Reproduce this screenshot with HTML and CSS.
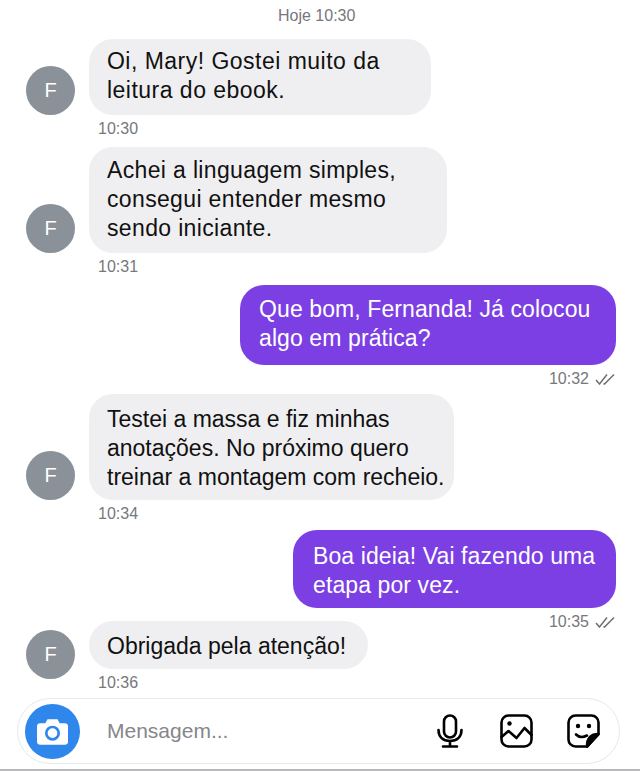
FILE: index.html
```html
<!DOCTYPE html>
<html lang="pt-BR">
<head>
    <meta charset="UTF-8">
    <meta name="viewport" content="width=device-width, initial-scale=1.0">
    <title>Mensagens</title>
    <link rel="stylesheet" href="styles.css">
</head>
<body>
    <div class="screen">
        <div class="day">Hoje 10:30</div>

        <div class="msg">
            <div class="avatar">F</div>
            <div class="body">
                <div class="bubble bubble-in b1">Oi, Mary! Gostei muito da<br>leitura do ebook.</div>
                <div class="time">10:30</div>
            </div>
        </div>

        <div class="msg">
            <div class="avatar">F</div>
            <div class="body">
                <div class="bubble bubble-in b2">Achei a linguagem simples,<br>consegui entender mesmo<br>sendo iniciante.</div>
                <div class="time">10:31</div>
            </div>
        </div>

        <div class="msg msg-out">
            <div class="body">
                <div class="bubble bubble-out b3">Que bom, Fernanda! Já colocou<br>algo em prática?</div>
                <div class="time time-out">10:32
                    <svg class="checks" viewBox="0 0 20 12"><path d="M1 7l3.500 4L12 1.500M8.500 10.500l1 .5L19 1.500"/></svg>
                </div>
            </div>
        </div>

        <div class="msg msg-before-out">
            <div class="avatar">F</div>
            <div class="body">
                <div class="bubble bubble-in b4">Testei a massa e fiz minhas<br>anotações. No próximo quero<br>treinar a montagem com recheio.</div>
                <div class="time">10:34</div>
            </div>
        </div>

        <div class="msg msg-out msg-tight">
            <div class="body">
                <div class="bubble bubble-out b5">Boa ideia! Vai fazendo uma<br>etapa por vez.</div>
                <div class="time time-out">10:35
                    <svg class="checks" viewBox="0 0 20 12"><path d="M1 7l3.500 4L12 1.500M8.500 10.500l1 .5L19 1.500"/></svg>
                </div>
            </div>
        </div>

        <div class="msg msg-last">
            <div class="avatar">F</div>
            <div class="body">
                <div class="bubble bubble-in b6">Obrigada pela atenção!</div>
                <div class="time">10:36</div>
            </div>
        </div>

        <div class="composer">
            <div class="camera">
                <svg viewBox="0 0 28 24" width="31" height="27">
                    <path fill="#fff" d="M9.500 1h9l2 3.500H25a3 3 0 0 1 3 3V21a3 3 0 0 1-3 3H3a3 3 0 0 1-3-3V7.500a3 3 0 0 1 3-3h4.500z"/>
                    <circle cx="14" cy="13.500" r="5.600" fill="none" stroke="#2f86eb" stroke-width="2.400"/>
                </svg>
            </div>
            <div class="placeholder">Mensagem...</div>
            <div class="tools">
                <svg class="tool" viewBox="0 0 26 34" width="26" height="34">
                    <rect x="7" y="1.500" width="12" height="22" rx="6"/>
                    <path d="M1.500 16c0 7 4.500 11 11.500 11s11.500-4 11.500-11M13 27v5.500M6 32.500h14"/>
                </svg>
                <svg class="tool tool-image" viewBox="0 0 33 34" width="33" height="34">
                    <rect x="1.500" y="1.500" width="30" height="31" rx="7"/>
                    <circle cx="9.500" cy="9.500" r="2.200" class="dot"/>
                    <path d="M1.500 23l7-6 8 7 8-10 7 7"/>
                </svg>
                <svg class="tool tool-sticker" viewBox="0 0 33 34" width="33" height="34">
                    <path d="M20 32.500H8.500a7 7 0 0 1-7-7v-17a7 7 0 0 1 7-7h16a7 7 0 0 1 7 7V20z"/>
                    <path class="fold" d="M20 32.500c0-8 4-12.500 11.500-12.500z"/>
                    <circle cx="11" cy="12" r="2.200" class="dot"/>
                    <circle cx="22" cy="12" r="2.200" class="dot"/>
                    <path d="M9 20.500c3 3 7 3 11 1"/>
                </svg>
            </div>
        </div>
    </div>
</body>
</html>
```

FILE: styles.css
```css
* {
    box-sizing: border-box;
}

html,
body {
    margin: 0;
    background-color: #fff;
}

.screen {
    width: 640px;
    height: 771px;
    padding-top: 6px;
    overflow: hidden;
    font-family: "Liberation Sans", Roboto, sans-serif;
    border-bottom: 2px solid #b9b9bb;
}

.day {
    height: 19px;
    margin-bottom: 14px;
    padding-left: 278px;
    font-size: 16px;
    line-height: 19px;
    color: #77777c;
}

.msg {
    display: flex;
    padding-left: 26px;
    margin-bottom: 8px;
}

.msg-before-out {
    margin-bottom: 6px;
}

.msg-out {
    justify-content: flex-end;
    padding-right: 24px;
    margin-bottom: 5px;
}

.msg-tight {
    margin-bottom: -11px;
}

.msg-last {
    margin-bottom: 5px;
}

.avatar {
    width: 49px;
    height: 49px;
    flex: none;
    align-self: flex-end;
    margin-right: 14px;
    margin-bottom: 24px;
    border-radius: 50%;
    background-color: #8a9199;
    color: #fff;
    font-size: 20px;
    line-height: 49px;
    text-align: center;
}

.msg-last .avatar {
    margin-bottom: 14px;
}

.bubble {
    font-size: 23px;
    line-height: 29px;
    letter-spacing: .1px;
    padding: 8px 18px;
    border-radius: 24px;
    white-space: nowrap;
}

.bubble-in {
    background-color: #efeff1;
    color: #111;
}

.bubble-out {
    background-color: #7b3fe4;
    color: #fff;
}

.b1 { width: 342px; height: 76px; letter-spacing: .48px; }
.b2 { width: 358px; height: 106px; padding-top: 9px; letter-spacing: .35px; }
.b3 { width: 376px; height: 80px; padding-left: 19px; padding-top: 10px; }
.b4 { width: 365px; height: 106px; padding-top: 11px; letter-spacing: 0; }
.b5 { width: 323px; height: 78px; padding-left: 20px; padding-top: 12px; }
.b6 { width: 279px; height: 48px; padding-top: 11px; letter-spacing: 0; }

.time {
    height: 20px;
    margin-top: 4px;
    padding-left: 9px;
    font-size: 16px;
    line-height: 20px;
    color: #77777c;
}

.time-out {
    display: flex;
    align-items: center;
    justify-content: flex-end;
    gap: 6px;
    padding-right: 1px;
}

.checks {
    width: 20px;
    height: 12px;
    fill: none;
    stroke: #6f6f74;
    stroke-width: 1.500;
}

.composer {
    display: flex;
    align-items: center;
    width: 603px;
    height: 66px;
    margin-left: 17px;
    padding: 0 19px 0 7px;
    border: 1px solid #e8e8ea;
    border-radius: 33px;
    background-color: #fff;
}

.camera {
    display: flex;
    align-items: center;
    justify-content: center;
    width: 55px;
    height: 55px;
    flex: none;
    border-radius: 50%;
    background-color: #2f86eb;
}

.placeholder {
    flex: 1;
    padding-left: 27px;
    font-size: 21px;
    color: #86868b;
}

.tools {
    display: flex;
    align-items: center;
}

.tool {
    fill: none;
    stroke: #000;
    stroke-width: 2.600;
    stroke-linecap: round;
    stroke-linejoin: round;
}

.tool-image {
    margin-left: 37px;
}

.tool-sticker {
    margin-left: 34px;
}

.tool .dot {
    fill: #000;
    stroke: none;
}

.tool .fold {
    fill: #000;
}
```
